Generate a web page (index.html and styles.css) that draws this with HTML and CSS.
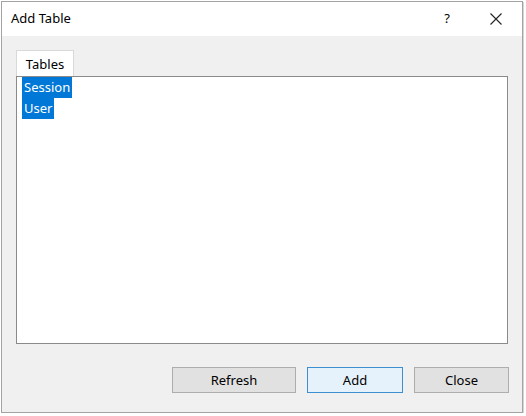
FILE: index.html
```html
<!DOCTYPE html>
<html>
<head>
<meta charset="utf-8">
<link rel="stylesheet" href="styles.css">
</head>
<body>
<div class="window">
  <div class="titlebar">
    <span class="title">Add Table</span>
    <span class="help">?</span>
    <span class="close">
      <svg width="12" height="12" viewBox="0 0 12 12"><path d="M0.5 0.5 L11.5 11.5 M11.5 0.5 L0.5 11.5" stroke="#222" stroke-width="1.1" fill="none"/></svg>
    </span>
  </div>
  <div class="body">
    <div class="tabs"><div class="tab">Tables</div></div>
    <div class="list">
      <div class="item"><span class="sel">Session</span></div>
      <div class="item"><span class="sel">User</span></div>
    </div>
    <div class="buttons">
      <button class="btn refresh">Refresh</button>
      <button class="btn add">Add</button>
      <button class="btn closebtn">Close</button>
    </div>
  </div>
</div>
</body>
</html>
```
FILE: styles.css
```css
html, body {
  margin: 0;
  padding: 0;
  background: #ffffff;
}
body {
  font-family: "Segoe UI", "Noto Sans", "Open Sans", sans-serif;
  font-size: 13px;
  color: #000;
}
.window {
  margin: 1px 0 0 1px;
  width: 520px;
  height: 410px;
  border: 1px solid #a3a3a3;
  box-shadow: 1px 1px 0 #d4d4d4;
  display: flex;
  flex-direction: column;
  background: #f0f0f0;
}
.titlebar {
  height: 34px;
  background: #fff;
  display: flex;
  align-items: center;
  padding-left: 9px;
}
.title {
  flex: 1;
  margin-top: -2px;
}
.help {
  width: 20px;
  text-align: center;
  font-size: 13px;
  margin-right: 33px;
  margin-top: -2px;
}
.close {
  width: 12px;
  height: 12px;
  margin-right: 20px;
  display: flex;
  margin-top: -1px;
}
.body {
  flex: 1;
  padding: 14px 12px 0 14px;
  display: flex;
  flex-direction: column;
}
.tabs {
  display: flex;
}
.tab {
  width: 56px;
  height: 25px;
  background: #fff;
  border: 1px solid #d9d9d9;
  border-bottom: none;
  display: flex;
  align-items: center;
  justify-content: center;
  box-sizing: content-box;
}
.list {
  background: #fff;
  border: 1px solid #8a8a8a;
  padding: 0 0 0 5px;
  box-sizing: border-box;
  width: 492px;
  height: 268px;
}
.item {
  height: 21px;
  display: flex;
}
.sel {
  background: #0078d7;
  color: #fff;
  padding: 0 2px 0 2px;
  line-height: 21px;
}
.buttons {
  display: flex;
  justify-content: flex-end;
  gap: 11px;
  margin-top: 23px;
  width: 493px;
}
.btn {
  font-family: inherit;
  font-size: 13px;
  height: 26px;
  background: #e1e1e1;
  border: 1px solid #adadad;
  padding: 0;
  color: #000;
}
.refresh { width: 124px; }
.add {
  width: 96px;
  background: #e5f1fb;
  border-color: #3c8fd0;
}
.closebtn { width: 95px; }
```
